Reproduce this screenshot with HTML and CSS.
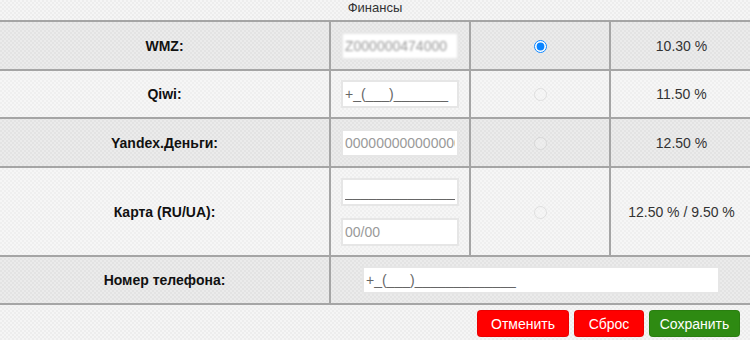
FILE: index.html
```html
<!DOCTYPE html>
<html lang="ru">
<head>
<meta charset="utf-8">
<title>Финансы</title>
<link rel="stylesheet" href="styles.css">
</head>
<body>
<div class="page">
  <div class="title">Финансы</div>
  <table class="fin">
    <colgroup>
      <col class="c1"><col class="c2"><col class="c3"><col class="c4">
    </colgroup>
    <tr class="row dark h49">
      <td class="label">WMZ:</td>
      <td class="field"><input class="inp blurred" type="text" value="Z000000474000"></td>
      <td class="radio"><input type="radio" name="pay" checked></td>
      <td class="pct">10.30 %</td>
    </tr>
    <tr class="row light h48">
      <td class="label">Qiwi:</td>
      <td class="field"><input class="inp" type="text" value="+_(___)_______"></td>
      <td class="radio"><input type="radio" name="pay" disabled></td>
      <td class="pct">11.50 %</td>
    </tr>
    <tr class="row dark h49">
      <td class="label">Yandex.Деньги:</td>
      <td class="field"><input class="inp" type="text" placeholder="0000000000000000"></td>
      <td class="radio"><input type="radio" name="pay" disabled></td>
      <td class="pct">12.50 %</td>
    </tr>
    <tr class="row light h89">
      <td class="label">Карта (RU/UA):</td>
      <td class="field">
        <div class="stack">
          <input class="inp" type="text" value="________________">
          <input class="inp" type="text" placeholder="00/00">
        </div>
      </td>
      <td class="radio"><input type="radio" name="pay" disabled></td>
      <td class="pct">12.50 % / 9.50 %</td>
    </tr>
    <tr class="row dark h48">
      <td class="label">Номер телефона:</td>
      <td class="field" colspan="3"><input class="inp wide" type="text" value="+_(___)_____________"></td>
    </tr>
  </table>
  <div class="actions">
    <button class="btn red w92" type="button">Отменить</button>
    <button class="btn red w70" type="button">Сброс</button>
    <button class="btn green w91" type="button">Сохранить</button>
  </div>
</div>
</body>
</html>
```

FILE: styles.css
```css
html, body {
  margin: 0;
  padding: 0;
}
body {
  width: 750px;
  height: 340px;
  overflow: hidden;
  font-family: "Liberation Sans", Arial, sans-serif;
  color: #333;
  background-color: #f1f1f1;
  background-image: repeating-conic-gradient(#ededed 0 25%, #f5f5f5 0 50%);
  background-size: 4px 4px;
}
.page {
  display: flex;
  flex-direction: column;
}
.title {
  height: 20px;
  line-height: 15px;
  font-size: 13px;
  text-align: center;
  color: #333;
}
.fin {
  border-collapse: collapse;
  table-layout: fixed;
  width: 752px;
}
.c1 { width: 330px; }
.c2 { width: 140px; }
.c3 { width: 140px; }
.c4 { width: 142px; }
.fin td {
  border: 2px solid #a5a5a5;
  padding: 0;
  text-align: center;
  vertical-align: middle;
}
.fin td:first-child { border-left: none; }
.fin td:last-child { border-right: none; }
.row.dark { background: rgba(0, 0, 0, 0.04); }
.row.light { background: rgba(255, 255, 255, 0.15); }
.h49 { height: 49px; }
.h48 { height: 48px; }
.h89 { height: 89px; }
.label {
  font-size: 14px;
  font-weight: bold;
  color: #111;
}
.pct {
  font-size: 14px;
  color: #333;
}
.inp {
  box-sizing: border-box;
  display: block;
  width: 118px;
  height: 28px;
  margin: 0 auto;
  padding: 0 2px;
  border: 2px solid #e6e6e6;
  background: #fff;
  font-family: "Liberation Sans", Arial, sans-serif;
  font-size: 14px;
  color: #666;
  outline: none;
}
.inp::placeholder { color: #9a9a9a; }
.blurred {
  color: #999;
  filter: blur(0.9px);
}
.stack {
  display: flex;
  flex-direction: column;
  gap: 12px;
  align-items: center;
}
.wide {
  width: 358px;
  margin-left: 31px;
}
.radio input {
  width: 13px;
  height: 13px;
  margin: 0;
  accent-color: #0a84ff;
  vertical-align: middle;
}
.radio input:disabled {
  opacity: 0.5;
}
.actions {
  display: flex;
  justify-content: flex-end;
  gap: 5px;
  padding: 5px 10px 0 0;
}
.btn {
  height: 27px;
  padding: 0;
  border: 1px solid rgba(0, 0, 0, 0.08);
  border-radius: 4px;
  font-family: "Liberation Sans", Arial, sans-serif;
  font-size: 14px;
  color: #fff;
  cursor: pointer;
}
.w92 { width: 92px; }
.w70 { width: 70px; }
.w91 { width: 91px; }
.btn.red { background: #ff0000; }
.btn.green { background: #2e8a12; }
```
